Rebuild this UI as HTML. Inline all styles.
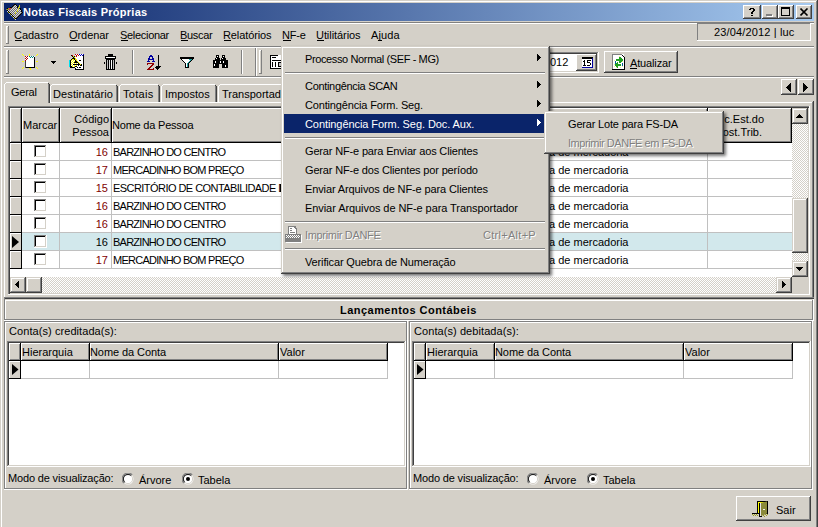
<!DOCTYPE html><html><head><meta charset="utf-8"><style>
html,body{margin:0;padding:0;width:818px;height:527px;overflow:hidden;background:#D4D0C8}
#w{position:relative;width:818px;height:527px;overflow:hidden}
#w div,#w span,#w svg{position:absolute}
#w span{font-family:"Liberation Sans",sans-serif;font-size:11px;line-height:13px;white-space:nowrap}
</style></head><body><div id="w">
<div style="left:0px;top:0px;width:818px;height:527px;background:#D4D0C8;"></div>
<div style="left:1px;top:1px;width:816px;height:1px;background:#FFFFFF;"></div>
<div style="left:1px;top:1px;width:1px;height:526px;background:#FFFFFF;"></div>
<div style="left:817px;top:0px;width:1px;height:527px;background:#404040;"></div>
<div style="left:816px;top:1px;width:1px;height:526px;background:#808080;"></div>
<div style="left:4px;top:3px;width:810px;height:18px;background:linear-gradient(to right,#0A246A,#A6CAF0);"></div>
<span style="left:23px;top:6px;color:#FFFFFF;font-weight:bold;letter-spacing:0.264px;">Notas Fiscais Próprias</span>
<div style="left:743px;top:5px;width:18px;height:14px;background:#D4D0C8;"></div>
<div style="left:743px;top:18px;width:18px;height:1px;background:#404040;"></div>
<div style="left:760px;top:5px;width:1px;height:14px;background:#404040;"></div>
<div style="left:744px;top:17px;width:16px;height:1px;background:#808080;"></div>
<div style="left:759px;top:6px;width:1px;height:12px;background:#808080;"></div>
<div style="left:743px;top:5px;width:17px;height:1px;background:#FFFFFF;"></div>
<div style="left:743px;top:5px;width:1px;height:13px;background:#FFFFFF;"></div>
<div style="left:762px;top:5px;width:16px;height:14px;background:#D4D0C8;"></div>
<div style="left:762px;top:18px;width:16px;height:1px;background:#404040;"></div>
<div style="left:777px;top:5px;width:1px;height:14px;background:#404040;"></div>
<div style="left:763px;top:17px;width:14px;height:1px;background:#808080;"></div>
<div style="left:776px;top:6px;width:1px;height:12px;background:#808080;"></div>
<div style="left:762px;top:5px;width:15px;height:1px;background:#FFFFFF;"></div>
<div style="left:762px;top:5px;width:1px;height:13px;background:#FFFFFF;"></div>
<div style="left:778px;top:5px;width:16px;height:14px;background:#D4D0C8;"></div>
<div style="left:778px;top:18px;width:16px;height:1px;background:#404040;"></div>
<div style="left:793px;top:5px;width:1px;height:14px;background:#404040;"></div>
<div style="left:779px;top:17px;width:14px;height:1px;background:#808080;"></div>
<div style="left:792px;top:6px;width:1px;height:12px;background:#808080;"></div>
<div style="left:778px;top:5px;width:15px;height:1px;background:#FFFFFF;"></div>
<div style="left:778px;top:5px;width:1px;height:13px;background:#FFFFFF;"></div>
<div style="left:796px;top:5px;width:16px;height:14px;background:#D4D0C8;"></div>
<div style="left:796px;top:18px;width:16px;height:1px;background:#404040;"></div>
<div style="left:811px;top:5px;width:1px;height:14px;background:#404040;"></div>
<div style="left:797px;top:17px;width:14px;height:1px;background:#808080;"></div>
<div style="left:810px;top:6px;width:1px;height:12px;background:#808080;"></div>
<div style="left:796px;top:5px;width:15px;height:1px;background:#FFFFFF;"></div>
<div style="left:796px;top:5px;width:1px;height:13px;background:#FFFFFF;"></div>
<svg style="left:749px;top:8px" width="6" height="8" shape-rendering="crispEdges"><g fill="#000"><rect x="1" y="0" width="1" height="1"/><rect x="2" y="0" width="1" height="1"/><rect x="3" y="0" width="1" height="1"/><rect x="4" y="0" width="1" height="1"/><rect x="0" y="1" width="1" height="1"/><rect x="1" y="1" width="1" height="1"/><rect x="4" y="1" width="1" height="1"/><rect x="5" y="1" width="1" height="1"/><rect x="4" y="2" width="1" height="1"/><rect x="5" y="2" width="1" height="1"/><rect x="3" y="3" width="1" height="1"/><rect x="4" y="3" width="1" height="1"/><rect x="2" y="4" width="1" height="1"/><rect x="3" y="4" width="1" height="1"/><rect x="2" y="5" width="1" height="1"/><rect x="3" y="5" width="1" height="1"/><rect x="2" y="7" width="1" height="1"/><rect x="3" y="7" width="1" height="1"/></g></svg>
<div style="left:767px;top:15px;width:6px;height:2px;background:#FFFFFF;"></div>
<div style="left:766px;top:14px;width:6px;height:2px;background:#808080;"></div>
<div style="left:781px;top:7px;width:7px;height:6px;border:1px solid #000;border-top-width:2px;"></div>
<svg style="position:absolute;left:800px;top:8px" width="9" height="8"><path d="M0.5 0.5L7.5 7.5M7.5 0.5L0.5 7.5" stroke="#000" stroke-width="1.6"/></svg>
<div style="left:4px;top:22px;width:810px;height:1px;background:#808080;"></div>
<div style="left:4px;top:23px;width:810px;height:1px;background:#FFFFFF;"></div>
<div style="left:6px;top:26px;width:1px;height:17px;background:#FFFFFF;"></div>
<div style="left:6px;top:26px;width:3px;height:1px;background:#FFFFFF;"></div>
<div style="left:8px;top:26px;width:1px;height:18px;background:#808080;"></div>
<div style="left:6px;top:43px;width:3px;height:1px;background:#808080;"></div>
<span style="left:14px;top:29px;color:#000;letter-spacing:-0.020px;">Cadastro</span>
<span style="left:69px;top:29px;color:#000;letter-spacing:-0.054px;">Ordenar</span>
<span style="left:120px;top:29px;color:#000;letter-spacing:-0.300px;">Selecionar</span>
<span style="left:180px;top:29px;color:#000;letter-spacing:-0.292px;">Buscar</span>
<span style="left:223px;top:29px;color:#000;letter-spacing:-0.103px;">Relatórios</span>
<span style="left:282px;top:29px;color:#000;letter-spacing:-0.184px;">NF-e</span>
<span style="left:316px;top:29px;color:#000;letter-spacing:-0.065px;">Utilitários</span>
<span style="left:371px;top:29px;color:#000;letter-spacing:0.109px;">Ajuda</span>
<div style="left:4px;top:46px;width:810px;height:1px;background:#808080;"></div>
<div style="left:4px;top:47px;width:810px;height:1px;background:#FFFFFF;"></div>
<div style="left:697px;top:23px;width:114px;height:1px;background:#808080;"></div>
<div style="left:697px;top:23px;width:1px;height:18px;background:#808080;"></div>
<div style="left:697px;top:40px;width:114px;height:1px;background:#FFFFFF;"></div>
<div style="left:810px;top:23px;width:1px;height:18px;background:#FFFFFF;"></div>
<span style="left:714px;top:26px;color:#000;letter-spacing:0.146px;">23/04/2012 | luc</span>
<div style="left:6px;top:50px;width:1px;height:23px;background:#FFFFFF;"></div>
<div style="left:6px;top:50px;width:3px;height:1px;background:#FFFFFF;"></div>
<div style="left:8px;top:50px;width:1px;height:24px;background:#808080;"></div>
<div style="left:6px;top:73px;width:3px;height:1px;background:#808080;"></div>
<div style="left:132px;top:50px;width:1px;height:24px;background:#808080;"></div>
<div style="left:133px;top:50px;width:1px;height:24px;background:#FFFFFF;"></div>
<div style="left:241px;top:50px;width:1px;height:24px;background:#808080;"></div>
<div style="left:242px;top:50px;width:1px;height:24px;background:#FFFFFF;"></div>
<div style="left:255px;top:48px;width:1px;height:28px;background:#808080;"></div>
<div style="left:256px;top:48px;width:1px;height:28px;background:#FFFFFF;"></div>
<div style="left:259px;top:50px;width:1px;height:23px;background:#FFFFFF;"></div>
<div style="left:259px;top:50px;width:3px;height:1px;background:#FFFFFF;"></div>
<div style="left:261px;top:50px;width:1px;height:24px;background:#808080;"></div>
<div style="left:259px;top:73px;width:3px;height:1px;background:#808080;"></div>
<div style="left:4px;top:76px;width:810px;height:1px;background:#808080;"></div>
<div style="left:4px;top:77px;width:810px;height:1px;background:#FFFFFF;"></div>
<div style="left:480px;top:52px;width:119px;height:21px;background:#FFFFFF;"></div>
<div style="left:480px;top:52px;width:119px;height:1px;background:#808080;"></div>
<div style="left:480px;top:52px;width:1px;height:21px;background:#808080;"></div>
<div style="left:480px;top:72px;width:119px;height:1px;background:#FFFFFF;"></div>
<div style="left:598px;top:52px;width:1px;height:21px;background:#FFFFFF;"></div>
<div style="left:481px;top:53px;width:117px;height:1px;background:#404040;"></div>
<div style="left:481px;top:53px;width:1px;height:19px;background:#404040;"></div>
<div style="left:481px;top:71px;width:117px;height:1px;background:#D4D0C8;"></div>
<div style="left:597px;top:53px;width:1px;height:19px;background:#D4D0C8;"></div>
<span style="left:550px;top:56px;color:#000;">012</span>
<div style="left:576px;top:54px;width:21px;height:17px;background:#D4D0C8;"></div>
<div style="left:576px;top:70px;width:21px;height:1px;background:#404040;"></div>
<div style="left:596px;top:54px;width:1px;height:17px;background:#404040;"></div>
<div style="left:577px;top:69px;width:19px;height:1px;background:#808080;"></div>
<div style="left:595px;top:55px;width:1px;height:15px;background:#808080;"></div>
<div style="left:576px;top:54px;width:20px;height:1px;background:#FFFFFF;"></div>
<div style="left:576px;top:54px;width:1px;height:16px;background:#FFFFFF;"></div>
<div style="left:604px;top:51px;width:74px;height:22px;background:#D4D0C8;"></div>
<div style="left:604px;top:72px;width:74px;height:1px;background:#404040;"></div>
<div style="left:677px;top:51px;width:1px;height:22px;background:#404040;"></div>
<div style="left:605px;top:71px;width:72px;height:1px;background:#808080;"></div>
<div style="left:676px;top:52px;width:1px;height:20px;background:#808080;"></div>
<div style="left:604px;top:51px;width:73px;height:1px;background:#FFFFFF;"></div>
<div style="left:604px;top:51px;width:1px;height:21px;background:#FFFFFF;"></div>
<span style="left:630px;top:57px;color:#000;letter-spacing:-0.146px;">Atualizar</span>
<div style="left:15px;top:40px;width:7px;height:1px;background:#000;"></div>
<div style="left:70px;top:40px;width:8px;height:1px;background:#000;"></div>
<div style="left:121px;top:40px;width:7px;height:1px;background:#000;"></div>
<div style="left:181px;top:40px;width:7px;height:1px;background:#000;"></div>
<div style="left:224px;top:40px;width:7px;height:1px;background:#000;"></div>
<div style="left:283px;top:40px;width:8px;height:1px;background:#000;"></div>
<div style="left:317px;top:40px;width:7px;height:1px;background:#000;"></div>
<div style="left:378px;top:40px;width:4px;height:1px;background:#000;"></div>
<div style="left:630px;top:68px;width:7px;height:1px;background:#000;"></div>
<svg style="left:5px;top:3px" width="18" height="18" shape-rendering="crispEdges"><rect x="9" y="1" width="1" height="1" fill="#000"/><rect x="10" y="1" width="1" height="1" fill="#000"/><rect x="8" y="2" width="1" height="1" fill="#000"/><rect x="9" y="2" width="1" height="1" fill="#707070"/><rect x="10" y="2" width="1" height="1" fill="#D8D8D8"/><rect x="11" y="2" width="1" height="1" fill="#000"/><rect x="14" y="2" width="1" height="1" fill="#D0D020"/><rect x="7" y="3" width="1" height="1" fill="#000"/><rect x="8" y="3" width="1" height="1" fill="#707070"/><rect x="9" y="3" width="1" height="1" fill="#D8D8D8"/><rect x="10" y="3" width="1" height="1" fill="#707070"/><rect x="11" y="3" width="1" height="1" fill="#D8D8D8"/><rect x="12" y="3" width="1" height="1" fill="#000"/><rect x="14" y="3" width="1" height="1" fill="#D0D020"/><rect x="5" y="4" width="1" height="1" fill="#000"/><rect x="6" y="4" width="1" height="1" fill="#000"/><rect x="7" y="4" width="1" height="1" fill="#707070"/><rect x="8" y="4" width="1" height="1" fill="#D8D8D8"/><rect x="9" y="4" width="1" height="1" fill="#707070"/><rect x="10" y="4" width="1" height="1" fill="#D8D8D8"/><rect x="11" y="4" width="1" height="1" fill="#707070"/><rect x="12" y="4" width="1" height="1" fill="#000"/><rect x="13" y="4" width="1" height="1" fill="#D0D020"/><rect x="14" y="4" width="1" height="1" fill="#D0D020"/><rect x="2" y="5" width="1" height="1" fill="#000"/><rect x="3" y="5" width="1" height="1" fill="#B0B000"/><rect x="4" y="5" width="1" height="1" fill="#E04040"/><rect x="5" y="5" width="1" height="1" fill="#E04040"/><rect x="6" y="5" width="1" height="1" fill="#707070"/><rect x="7" y="5" width="1" height="1" fill="#D8D8D8"/><rect x="8" y="5" width="1" height="1" fill="#707070"/><rect x="9" y="5" width="1" height="1" fill="#D8D8D8"/><rect x="10" y="5" width="1" height="1" fill="#707070"/><rect x="11" y="5" width="1" height="1" fill="#D8D8D8"/><rect x="12" y="5" width="1" height="1" fill="#707070"/><rect x="13" y="5" width="1" height="1" fill="#D0D020"/><rect x="15" y="5" width="1" height="1" fill="#000"/><rect x="1" y="6" width="1" height="1" fill="#707070"/><rect x="2" y="6" width="1" height="1" fill="#B0B000"/><rect x="3" y="6" width="1" height="1" fill="#707070"/><rect x="4" y="6" width="1" height="1" fill="#E04040"/><rect x="5" y="6" width="1" height="1" fill="#707070"/><rect x="6" y="6" width="1" height="1" fill="#D8D8D8"/><rect x="7" y="6" width="1" height="1" fill="#707070"/><rect x="8" y="6" width="1" height="1" fill="#D8D8D8"/><rect x="9" y="6" width="1" height="1" fill="#707070"/><rect x="10" y="6" width="1" height="1" fill="#D8D8D8"/><rect x="11" y="6" width="1" height="1" fill="#707070"/><rect x="12" y="6" width="1" height="1" fill="#D8D8D8"/><rect x="13" y="6" width="1" height="1" fill="#D0D020"/><rect x="14" y="6" width="1" height="1" fill="#D8D8D8"/><rect x="15" y="6" width="1" height="1" fill="#000"/><rect x="2" y="7" width="1" height="1" fill="#000"/><rect x="3" y="7" width="1" height="1" fill="#D8D8D8"/><rect x="4" y="7" width="1" height="1" fill="#707070"/><rect x="5" y="7" width="1" height="1" fill="#D8D8D8"/><rect x="6" y="7" width="1" height="1" fill="#707070"/><rect x="7" y="7" width="1" height="1" fill="#D8D8D8"/><rect x="8" y="7" width="1" height="1" fill="#707070"/><rect x="9" y="7" width="1" height="1" fill="#D8D8D8"/><rect x="10" y="7" width="1" height="1" fill="#707070"/><rect x="11" y="7" width="1" height="1" fill="#D8D8D8"/><rect x="12" y="7" width="1" height="1" fill="#D0D020"/><rect x="13" y="7" width="1" height="1" fill="#D8D8D8"/><rect x="14" y="7" width="1" height="1" fill="#707070"/><rect x="15" y="7" width="1" height="1" fill="#D8D8D8"/><rect x="16" y="7" width="1" height="1" fill="#000"/><rect x="2" y="8" width="1" height="1" fill="#D8D8D8"/><rect x="3" y="8" width="1" height="1" fill="#000"/><rect x="4" y="8" width="1" height="1" fill="#D8D8D8"/><rect x="5" y="8" width="1" height="1" fill="#707070"/><rect x="6" y="8" width="1" height="1" fill="#D8D8D8"/><rect x="7" y="8" width="1" height="1" fill="#707070"/><rect x="8" y="8" width="1" height="1" fill="#D8D8D8"/><rect x="9" y="8" width="1" height="1" fill="#707070"/><rect x="10" y="8" width="1" height="1" fill="#D8D8D8"/><rect x="11" y="8" width="1" height="1" fill="#707070"/><rect x="12" y="8" width="1" height="1" fill="#D0D020"/><rect x="13" y="8" width="1" height="1" fill="#707070"/><rect x="14" y="8" width="1" height="1" fill="#D8D8D8"/><rect x="15" y="8" width="1" height="1" fill="#707070"/><rect x="16" y="8" width="1" height="1" fill="#000"/><rect x="3" y="9" width="1" height="1" fill="#B0B000"/><rect x="4" y="9" width="1" height="1" fill="#000"/><rect x="5" y="9" width="1" height="1" fill="#D8D8D8"/><rect x="6" y="9" width="1" height="1" fill="#707070"/><rect x="7" y="9" width="1" height="1" fill="#D8D8D8"/><rect x="8" y="9" width="1" height="1" fill="#707070"/><rect x="9" y="9" width="1" height="1" fill="#D8D8D8"/><rect x="10" y="9" width="1" height="1" fill="#D0D020"/><rect x="11" y="9" width="1" height="1" fill="#D8D8D8"/><rect x="12" y="9" width="1" height="1" fill="#707070"/><rect x="13" y="9" width="1" height="1" fill="#D8D8D8"/><rect x="14" y="9" width="1" height="1" fill="#707070"/><rect x="15" y="9" width="1" height="1" fill="#D8D8D8"/><rect x="16" y="9" width="1" height="1" fill="#707070"/><rect x="17" y="9" width="1" height="1" fill="#000"/><rect x="4" y="10" width="1" height="1" fill="#D8D8D8"/><rect x="5" y="10" width="1" height="1" fill="#000"/><rect x="6" y="10" width="1" height="1" fill="#D8D8D8"/><rect x="7" y="10" width="1" height="1" fill="#707070"/><rect x="8" y="10" width="1" height="1" fill="#D8D8D8"/><rect x="9" y="10" width="1" height="1" fill="#707070"/><rect x="10" y="10" width="1" height="1" fill="#D0D020"/><rect x="11" y="10" width="1" height="1" fill="#707070"/><rect x="12" y="10" width="1" height="1" fill="#D8D8D8"/><rect x="13" y="10" width="1" height="1" fill="#707070"/><rect x="14" y="10" width="1" height="1" fill="#D8D8D8"/><rect x="15" y="10" width="1" height="1" fill="#707070"/><rect x="16" y="10" width="1" height="1" fill="#000"/><rect x="5" y="11" width="1" height="1" fill="#B0B000"/><rect x="6" y="11" width="1" height="1" fill="#000"/><rect x="7" y="11" width="1" height="1" fill="#D8D8D8"/><rect x="8" y="11" width="1" height="1" fill="#707070"/><rect x="9" y="11" width="1" height="1" fill="#D8D8D8"/><rect x="10" y="11" width="1" height="1" fill="#707070"/><rect x="11" y="11" width="1" height="1" fill="#D8D8D8"/><rect x="12" y="11" width="1" height="1" fill="#707070"/><rect x="13" y="11" width="1" height="1" fill="#D8D8D8"/><rect x="14" y="11" width="1" height="1" fill="#707070"/><rect x="15" y="11" width="1" height="1" fill="#000"/><rect x="6" y="12" width="1" height="1" fill="#D8D8D8"/><rect x="7" y="12" width="1" height="1" fill="#000"/><rect x="8" y="12" width="1" height="1" fill="#D8D8D8"/><rect x="9" y="12" width="1" height="1" fill="#707070"/><rect x="10" y="12" width="1" height="1" fill="#D8D8D8"/><rect x="11" y="12" width="1" height="1" fill="#707070"/><rect x="12" y="12" width="1" height="1" fill="#D8D8D8"/><rect x="13" y="12" width="1" height="1" fill="#707070"/><rect x="14" y="12" width="1" height="1" fill="#000"/><rect x="7" y="13" width="1" height="1" fill="#B0B000"/><rect x="8" y="13" width="1" height="1" fill="#000"/><rect x="9" y="13" width="1" height="1" fill="#D8D8D8"/><rect x="10" y="13" width="1" height="1" fill="#707070"/><rect x="11" y="13" width="1" height="1" fill="#D8D8D8"/><rect x="12" y="13" width="1" height="1" fill="#707070"/><rect x="13" y="13" width="1" height="1" fill="#000"/><rect x="8" y="14" width="1" height="1" fill="#D8D8D8"/><rect x="9" y="14" width="1" height="1" fill="#000"/><rect x="10" y="14" width="1" height="1" fill="#D8D8D8"/><rect x="11" y="14" width="1" height="1" fill="#707070"/><rect x="12" y="14" width="1" height="1" fill="#000"/><rect x="9" y="15" width="1" height="1" fill="#B0B000"/><rect x="10" y="15" width="1" height="1" fill="#000"/><rect x="11" y="15" width="1" height="1" fill="#000"/><rect x="10" y="16" width="1" height="1" fill="#D8D8D8"/></svg>
<svg style="left:20px;top:52px" width="20" height="20" shape-rendering="crispEdges">
<rect x="5" y="4" width="10" height="12" fill="#fff"/><rect x="14" y="5" width="1" height="11" fill="#000"/><rect x="5" y="15" width="10" height="1" fill="#000"/><rect x="5" y="8" width="1" height="8" fill="#404040"/>
<g fill="#B00000"><rect x="5" y="4" width="1" height="1"/><rect x="7" y="4" width="1" height="1"/><rect x="6" y="5" width="1" height="1"/><rect x="5" y="6" width="1" height="1"/><rect x="7" y="6" width="1" height="1"/><rect x="6" y="7" width="1" height="1"/><rect x="5" y="8" width="1" height="1"/></g>
<g fill="#008080"><rect x="9" y="4" width="1" height="1"/><rect x="11" y="4" width="1" height="1"/><rect x="13" y="4" width="1" height="1"/><rect x="10" y="5" width="1" height="1"/><rect x="12" y="5" width="1" height="1"/></g>
<g fill="#FFFF00"><rect x="2" y="2" width="1" height="1"/><rect x="3" y="3" width="1" height="1"/><rect x="9" y="2" width="1" height="2"/><rect x="17" y="2" width="1" height="1"/><rect x="16" y="3" width="1" height="1"/>
<rect x="2" y="9" width="2" height="1"/><rect x="16" y="9" width="2" height="1"/>
<rect x="3" y="15" width="1" height="1"/><rect x="2" y="16" width="1" height="1"/><rect x="9" y="16" width="2" height="1"/><rect x="10" y="17" width="1" height="1"/><rect x="16" y="15" width="1" height="1"/><rect x="17" y="16" width="1" height="1"/></g>
</svg>
<svg style="left:51px;top:61px" width="5" height="3" shape-rendering="crispEdges"><path d="M0 0h5v1h-1v1h-1v1h-1v-1h-1v-1h-1z" fill="#000"/></svg>
<svg style="left:66px;top:51px" width="20" height="20" shape-rendering="crispEdges"><rect x="9" y="3" width="1" height="1" fill="#C00000"/><rect x="10" y="3" width="1" height="1" fill="#FFFFFF"/><rect x="11" y="3" width="1" height="1" fill="#C00000"/><rect x="12" y="3" width="1" height="1" fill="#FFFFFF"/><rect x="13" y="3" width="1" height="1" fill="#0000C0"/><rect x="14" y="3" width="1" height="1" fill="#FFFFFF"/><rect x="15" y="3" width="1" height="1" fill="#0000C0"/><rect x="16" y="3" width="1" height="1" fill="#FFFFFF"/><rect x="17" y="3" width="1" height="1" fill="#0000C0"/><rect x="5" y="4" width="1" height="1" fill="#000"/><rect x="6" y="4" width="1" height="1" fill="#E00000"/><rect x="9" y="4" width="1" height="1" fill="#FFFFFF"/><rect x="10" y="4" width="1" height="1" fill="#C00000"/><rect x="11" y="4" width="1" height="1" fill="#FFFFFF"/><rect x="12" y="4" width="1" height="1" fill="#C00000"/><rect x="13" y="4" width="1" height="1" fill="#FFFFFF"/><rect x="14" y="4" width="1" height="1" fill="#0000C0"/><rect x="15" y="4" width="1" height="1" fill="#FFFFFF"/><rect x="16" y="4" width="1" height="1" fill="#0000C0"/><rect x="17" y="4" width="1" height="1" fill="#000"/><rect x="6" y="5" width="1" height="1" fill="#000"/><rect x="7" y="5" width="1" height="1" fill="#E8E800"/><rect x="8" y="5" width="1" height="1" fill="#000"/><rect x="10" y="5" width="1" height="1" fill="#C00000"/><rect x="11" y="5" width="1" height="1" fill="#FFFFFF"/><rect x="12" y="5" width="1" height="1" fill="#FFFFFF"/><rect x="13" y="5" width="1" height="1" fill="#FFFFFF"/><rect x="14" y="5" width="1" height="1" fill="#FFFFFF"/><rect x="15" y="5" width="1" height="1" fill="#FFFFFF"/><rect x="16" y="5" width="1" height="1" fill="#FFFFFF"/><rect x="17" y="5" width="1" height="1" fill="#000"/><rect x="7" y="6" width="1" height="1" fill="#000"/><rect x="8" y="6" width="1" height="1" fill="#E8E800"/><rect x="9" y="6" width="1" height="1" fill="#FFFFFF"/><rect x="10" y="6" width="1" height="1" fill="#FFFFFF"/><rect x="11" y="6" width="1" height="1" fill="#FFFFFF"/><rect x="12" y="6" width="1" height="1" fill="#FFFFFF"/><rect x="13" y="6" width="1" height="1" fill="#FFFFFF"/><rect x="14" y="6" width="1" height="1" fill="#FFFFFF"/><rect x="15" y="6" width="1" height="1" fill="#FFFFFF"/><rect x="16" y="6" width="1" height="1" fill="#FFFFFF"/><rect x="17" y="6" width="1" height="1" fill="#000"/><rect x="6" y="7" width="1" height="1" fill="#000"/><rect x="7" y="7" width="1" height="1" fill="#000"/><rect x="8" y="7" width="1" height="1" fill="#000"/><rect x="9" y="7" width="1" height="1" fill="#E8E800"/><rect x="10" y="7" width="1" height="1" fill="#FFFFFF"/><rect x="11" y="7" width="1" height="1" fill="#FFFFFF"/><rect x="12" y="7" width="1" height="1" fill="#FFFFFF"/><rect x="13" y="7" width="1" height="1" fill="#FFFFFF"/><rect x="14" y="7" width="1" height="1" fill="#FFFFFF"/><rect x="15" y="7" width="1" height="1" fill="#FFFFFF"/><rect x="16" y="7" width="1" height="1" fill="#FFFFFF"/><rect x="17" y="7" width="1" height="1" fill="#000"/><rect x="5" y="8" width="1" height="1" fill="#000"/><rect x="6" y="8" width="1" height="1" fill="#FFFF00"/><rect x="7" y="8" width="1" height="1" fill="#FFFF00"/><rect x="8" y="8" width="1" height="1" fill="#000"/><rect x="9" y="8" width="1" height="1" fill="#E8E800"/><rect x="10" y="8" width="1" height="1" fill="#E8E800"/><rect x="11" y="8" width="1" height="1" fill="#FFFFFF"/><rect x="12" y="8" width="1" height="1" fill="#FFFFFF"/><rect x="13" y="8" width="1" height="1" fill="#FFFFFF"/><rect x="14" y="8" width="1" height="1" fill="#FFFFFF"/><rect x="15" y="8" width="1" height="1" fill="#FFFFFF"/><rect x="16" y="8" width="1" height="1" fill="#FFFFFF"/><rect x="17" y="8" width="1" height="1" fill="#000"/><rect x="3" y="9" width="1" height="1" fill="#00E0F0"/><rect x="4" y="9" width="1" height="1" fill="#000"/><rect x="5" y="9" width="1" height="1" fill="#FFFF00"/><rect x="6" y="9" width="1" height="1" fill="#FFFFFF"/><rect x="7" y="9" width="1" height="1" fill="#FFFF00"/><rect x="8" y="9" width="1" height="1" fill="#FFFFFF"/><rect x="9" y="9" width="1" height="1" fill="#000"/><rect x="10" y="9" width="1" height="1" fill="#E8E800"/><rect x="11" y="9" width="1" height="1" fill="#FFFFFF"/><rect x="12" y="9" width="1" height="1" fill="#FFFFFF"/><rect x="13" y="9" width="1" height="1" fill="#000"/><rect x="14" y="9" width="1" height="1" fill="#000"/><rect x="15" y="9" width="1" height="1" fill="#FFFFFF"/><rect x="16" y="9" width="1" height="1" fill="#FFFFFF"/><rect x="17" y="9" width="1" height="1" fill="#000"/><rect x="3" y="10" width="1" height="1" fill="#00E0F0"/><rect x="4" y="10" width="1" height="1" fill="#000"/><rect x="5" y="10" width="1" height="1" fill="#FFFFFF"/><rect x="6" y="10" width="1" height="1" fill="#FFFF00"/><rect x="7" y="10" width="1" height="1" fill="#FFFFFF"/><rect x="8" y="10" width="1" height="1" fill="#FFFF00"/><rect x="9" y="10" width="1" height="1" fill="#000"/><rect x="10" y="10" width="1" height="1" fill="#000"/><rect x="11" y="10" width="1" height="1" fill="#E8E800"/><rect x="12" y="10" width="1" height="1" fill="#FFFFFF"/><rect x="13" y="10" width="1" height="1" fill="#FFFFFF"/><rect x="14" y="10" width="1" height="1" fill="#FFFFFF"/><rect x="15" y="10" width="1" height="1" fill="#FFFFFF"/><rect x="16" y="10" width="1" height="1" fill="#FFFFFF"/><rect x="17" y="10" width="1" height="1" fill="#000"/><rect x="3" y="11" width="1" height="1" fill="#00E0F0"/><rect x="4" y="11" width="1" height="1" fill="#000"/><rect x="5" y="11" width="1" height="1" fill="#FFFF00"/><rect x="6" y="11" width="1" height="1" fill="#FFFFFF"/><rect x="7" y="11" width="1" height="1" fill="#FFFF00"/><rect x="8" y="11" width="1" height="1" fill="#000"/><rect x="9" y="11" width="1" height="1" fill="#000"/><rect x="10" y="11" width="1" height="1" fill="#000"/><rect x="11" y="11" width="1" height="1" fill="#000"/><rect x="12" y="11" width="1" height="1" fill="#E8E800"/><rect x="13" y="11" width="1" height="1" fill="#FFFFFF"/><rect x="14" y="11" width="1" height="1" fill="#FFFFFF"/><rect x="15" y="11" width="1" height="1" fill="#FFFFFF"/><rect x="16" y="11" width="1" height="1" fill="#FFFFFF"/><rect x="17" y="11" width="1" height="1" fill="#000"/><rect x="3" y="12" width="1" height="1" fill="#00E0F0"/><rect x="4" y="12" width="1" height="1" fill="#000"/><rect x="5" y="12" width="1" height="1" fill="#FFFFFF"/><rect x="6" y="12" width="1" height="1" fill="#FFFF00"/><rect x="7" y="12" width="1" height="1" fill="#FFFFFF"/><rect x="8" y="12" width="1" height="1" fill="#FFFF00"/><rect x="9" y="12" width="1" height="1" fill="#FFFFFF"/><rect x="10" y="12" width="1" height="1" fill="#FFFF00"/><rect x="11" y="12" width="1" height="1" fill="#FFFFFF"/><rect x="12" y="12" width="1" height="1" fill="#000"/><rect x="13" y="12" width="1" height="1" fill="#E8E800"/><rect x="14" y="12" width="1" height="1" fill="#FFFFFF"/><rect x="15" y="12" width="1" height="1" fill="#FFFFFF"/><rect x="16" y="12" width="1" height="1" fill="#FFFFFF"/><rect x="17" y="12" width="1" height="1" fill="#000"/><rect x="3" y="13" width="1" height="1" fill="#00E0F0"/><rect x="4" y="13" width="1" height="1" fill="#000"/><rect x="5" y="13" width="1" height="1" fill="#FFFF00"/><rect x="6" y="13" width="1" height="1" fill="#FFFFFF"/><rect x="7" y="13" width="1" height="1" fill="#000"/><rect x="8" y="13" width="1" height="1" fill="#000"/><rect x="9" y="13" width="1" height="1" fill="#000"/><rect x="10" y="13" width="1" height="1" fill="#000"/><rect x="11" y="13" width="1" height="1" fill="#000"/><rect x="12" y="13" width="1" height="1" fill="#000"/><rect x="13" y="13" width="1" height="1" fill="#000"/><rect x="14" y="13" width="1" height="1" fill="#E8E800"/><rect x="15" y="13" width="1" height="1" fill="#000"/><rect x="16" y="13" width="1" height="1" fill="#FFFFFF"/><rect x="17" y="13" width="1" height="1" fill="#000"/><rect x="3" y="14" width="1" height="1" fill="#00E0F0"/><rect x="4" y="14" width="1" height="1" fill="#000"/><rect x="5" y="14" width="1" height="1" fill="#FFFFFF"/><rect x="6" y="14" width="1" height="1" fill="#FFFF00"/><rect x="7" y="14" width="1" height="1" fill="#FFFFFF"/><rect x="8" y="14" width="1" height="1" fill="#FFFF00"/><rect x="9" y="14" width="1" height="1" fill="#FFFFFF"/><rect x="10" y="14" width="1" height="1" fill="#FFFF00"/><rect x="11" y="14" width="1" height="1" fill="#FFFFFF"/><rect x="12" y="14" width="1" height="1" fill="#000"/><rect x="13" y="14" width="1" height="1" fill="#FFFFFF"/><rect x="14" y="14" width="1" height="1" fill="#000"/><rect x="15" y="14" width="1" height="1" fill="#000"/><rect x="16" y="14" width="1" height="1" fill="#FFFFFF"/><rect x="17" y="14" width="1" height="1" fill="#000"/><rect x="3" y="15" width="1" height="1" fill="#00E0F0"/><rect x="4" y="15" width="1" height="1" fill="#000"/><rect x="5" y="15" width="1" height="1" fill="#000"/><rect x="6" y="15" width="1" height="1" fill="#FFFF00"/><rect x="7" y="15" width="1" height="1" fill="#FFFFFF"/><rect x="8" y="15" width="1" height="1" fill="#FFFF00"/><rect x="9" y="15" width="1" height="1" fill="#000"/><rect x="10" y="15" width="1" height="1" fill="#000"/><rect x="11" y="15" width="1" height="1" fill="#FFFFFF"/><rect x="12" y="15" width="1" height="1" fill="#FFFFFF"/><rect x="13" y="15" width="1" height="1" fill="#FFFFFF"/><rect x="14" y="15" width="1" height="1" fill="#FFFFFF"/><rect x="15" y="15" width="1" height="1" fill="#FFFFFF"/><rect x="16" y="15" width="1" height="1" fill="#FFFFFF"/><rect x="17" y="15" width="1" height="1" fill="#000"/><rect x="4" y="16" width="1" height="1" fill="#000"/><rect x="5" y="16" width="1" height="1" fill="#000"/><rect x="6" y="16" width="1" height="1" fill="#000"/><rect x="7" y="16" width="1" height="1" fill="#000"/><rect x="8" y="16" width="1" height="1" fill="#000"/><rect x="9" y="16" width="1" height="1" fill="#FFFFFF"/><rect x="10" y="16" width="1" height="1" fill="#FFFFFF"/><rect x="11" y="16" width="1" height="1" fill="#000"/><rect x="12" y="16" width="1" height="1" fill="#FFFFFF"/><rect x="13" y="16" width="1" height="1" fill="#000"/><rect x="14" y="16" width="1" height="1" fill="#000"/><rect x="15" y="16" width="1" height="1" fill="#FFFFFF"/><rect x="16" y="16" width="1" height="1" fill="#FFFFFF"/><rect x="17" y="16" width="1" height="1" fill="#000"/><rect x="9" y="17" width="1" height="1" fill="#000"/><rect x="10" y="17" width="1" height="1" fill="#FFFFFF"/><rect x="11" y="17" width="1" height="1" fill="#FFFFFF"/><rect x="12" y="17" width="1" height="1" fill="#FFFFFF"/><rect x="13" y="17" width="1" height="1" fill="#FFFFFF"/><rect x="14" y="17" width="1" height="1" fill="#FFFFFF"/><rect x="15" y="17" width="1" height="1" fill="#FFFFFF"/><rect x="16" y="17" width="1" height="1" fill="#FFFFFF"/><rect x="17" y="17" width="1" height="1" fill="#000"/><rect x="9" y="18" width="1" height="1" fill="#000"/><rect x="10" y="18" width="1" height="1" fill="#000"/><rect x="11" y="18" width="1" height="1" fill="#000"/><rect x="12" y="18" width="1" height="1" fill="#000"/><rect x="13" y="18" width="1" height="1" fill="#000"/><rect x="14" y="18" width="1" height="1" fill="#000"/><rect x="15" y="18" width="1" height="1" fill="#000"/><rect x="16" y="18" width="1" height="1" fill="#000"/><rect x="17" y="18" width="1" height="1" fill="#000"/></svg>
<svg style="left:103px;top:53px" width="16" height="18" shape-rendering="crispEdges">
<rect x="5" y="1" width="5" height="2" fill="#000"/><rect x="2" y="3" width="11" height="3" fill="#000"/><rect x="3" y="4" width="9" height="1" fill="#fff"/>
<rect x="3" y="6" width="9" height="11" fill="#000"/><rect x="4" y="7" width="1" height="9" fill="#C0C0C0"/><rect x="6" y="7" width="1" height="9" fill="#E0E0E0"/><rect x="8" y="7" width="1" height="9" fill="#fff"/><rect x="10" y="7" width="1" height="9" fill="#C0C0C0"/>
<rect x="1" y="9" width="1" height="2" fill="#000"/><rect x="13" y="9" width="1" height="2" fill="#000"/>
</svg>
<svg style="left:147px;top:54px" width="16" height="18" shape-rendering="crispEdges"><rect x="3" y="1" width="1" height="1" fill="#0000A0"/><rect x="4" y="1" width="1" height="1" fill="#0000A0"/><rect x="2" y="2" width="1" height="1" fill="#0000A0"/><rect x="3" y="2" width="1" height="1" fill="#0000A0"/><rect x="4" y="2" width="1" height="1" fill="#0000A0"/><rect x="5" y="2" width="1" height="1" fill="#0000A0"/><rect x="2" y="3" width="1" height="1" fill="#0000A0"/><rect x="5" y="3" width="1" height="1" fill="#0000A0"/><rect x="1" y="4" width="1" height="1" fill="#0000A0"/><rect x="2" y="4" width="1" height="1" fill="#0000A0"/><rect x="5" y="4" width="1" height="1" fill="#0000A0"/><rect x="6" y="4" width="1" height="1" fill="#0000A0"/><rect x="1" y="5" width="1" height="1" fill="#0000A0"/><rect x="2" y="5" width="1" height="1" fill="#0000A0"/><rect x="3" y="5" width="1" height="1" fill="#0000A0"/><rect x="4" y="5" width="1" height="1" fill="#0000A0"/><rect x="5" y="5" width="1" height="1" fill="#0000A0"/><rect x="6" y="5" width="1" height="1" fill="#0000A0"/><rect x="1" y="6" width="1" height="1" fill="#0000A0"/><rect x="6" y="6" width="1" height="1" fill="#0000A0"/><rect x="0" y="7" width="1" height="1" fill="#0000A0"/><rect x="1" y="7" width="1" height="1" fill="#0000A0"/><rect x="2" y="7" width="1" height="1" fill="#0000A0"/><rect x="5" y="7" width="1" height="1" fill="#0000A0"/><rect x="6" y="7" width="1" height="1" fill="#0000A0"/><rect x="7" y="7" width="1" height="1" fill="#0000A0"/><rect x="0" y="9" width="1" height="1" fill="#900000"/><rect x="1" y="9" width="1" height="1" fill="#900000"/><rect x="2" y="9" width="1" height="1" fill="#900000"/><rect x="3" y="9" width="1" height="1" fill="#900000"/><rect x="4" y="9" width="1" height="1" fill="#900000"/><rect x="5" y="9" width="1" height="1" fill="#900000"/><rect x="6" y="9" width="1" height="1" fill="#900000"/><rect x="0" y="10" width="1" height="1" fill="#900000"/><rect x="5" y="10" width="1" height="1" fill="#900000"/><rect x="6" y="10" width="1" height="1" fill="#900000"/><rect x="4" y="11" width="1" height="1" fill="#900000"/><rect x="5" y="11" width="1" height="1" fill="#900000"/><rect x="3" y="12" width="1" height="1" fill="#900000"/><rect x="4" y="12" width="1" height="1" fill="#900000"/><rect x="2" y="13" width="1" height="1" fill="#900000"/><rect x="3" y="13" width="1" height="1" fill="#900000"/><rect x="1" y="14" width="1" height="1" fill="#900000"/><rect x="2" y="14" width="1" height="1" fill="#900000"/><rect x="6" y="14" width="1" height="1" fill="#900000"/><rect x="0" y="15" width="1" height="1" fill="#900000"/><rect x="1" y="15" width="1" height="1" fill="#900000"/><rect x="2" y="15" width="1" height="1" fill="#900000"/><rect x="3" y="15" width="1" height="1" fill="#900000"/><rect x="4" y="15" width="1" height="1" fill="#900000"/><rect x="5" y="15" width="1" height="1" fill="#900000"/><rect x="6" y="15" width="1" height="1" fill="#900000"/>
<rect x="11" y="1" width="1" height="14" fill="#000"/><path d="M9 12h5v1h-1v1h-1v1h-1v1h-1v-1h-1v-1h-1z" fill="#000"/>
</svg>
<svg style="left:180px;top:57px" width="14" height="11" shape-rendering="crispEdges">
<path d="M0 0h14v2h-1v1h-1v1h-1v1h-1v1h-1v5h-4v-5h-1v-1h-1v-1h-1v-1h-1v-1h-1z" fill="#000"/>
<path d="M2 2h10v1h-1v1h-1v1h-1v1h-1v4h-2v-4h-1v-1h-1v-1h-1v-1h-1z" fill="#fff"/>
<path d="M8 2h4v1h-1v1h-1v1h-1v1h-1v4h-1v-4h1v-1h1v-1h1v-1h-1z" fill="#20A0A0"/>
</svg>
<svg style="left:213px;top:55px" width="15" height="13" shape-rendering="crispEdges">
<g fill="#000"><rect x="3" y="0" width="3" height="3"/><rect x="9" y="0" width="3" height="3"/><rect x="2" y="3" width="5" height="3"/><rect x="8" y="3" width="5" height="3"/>
<rect x="0" y="5" width="6" height="8"/><rect x="9" y="5" width="6" height="8"/><rect x="6" y="5" width="3" height="4"/></g>
<g fill="#fff"><rect x="4" y="1" width="1" height="1"/><rect x="10" y="1" width="1" height="1"/><rect x="3" y="3" width="1" height="1"/><rect x="9" y="3" width="1" height="1"/>
<rect x="2" y="6" width="1" height="2"/><rect x="10" y="6" width="1" height="2"/><rect x="7" y="6" width="1" height="2"/><rect x="1" y="9" width="1" height="2"/><rect x="12" y="10" width="1" height="2"/></g>
</svg>
<svg style="left:269px;top:54px" width="12" height="16" shape-rendering="crispEdges">
<rect x="1" y="1" width="11" height="14" fill="#fff"/><rect x="1" y="1" width="1" height="14" fill="#000"/><rect x="1" y="1" width="8" height="1" fill="#000"/><rect x="1" y="14" width="11" height="1" fill="#000"/>
<rect x="3" y="3" width="4" height="1" fill="#000"/><rect x="3" y="6" width="9" height="1" fill="#000"/><rect x="3" y="8" width="1" height="5" fill="#000"/><rect x="6" y="8" width="1" height="5" fill="#000"/><rect x="9" y="8" width="3" height="5" fill="#000"/><rect x="10" y="9" width="2" height="3" fill="#C0C0C0"/>
</svg>
<svg style="left:581px;top:56px" width="13" height="13" shape-rendering="crispEdges">
<rect x="1" y="1" width="11" height="11" fill="#fff"/><rect x="1" y="1" width="11" height="2" fill="#000"/>
<rect x="11" y="2" width="1" height="10" fill="#0000A0"/><rect x="1" y="11" width="11" height="1" fill="#0000A0"/>
<rect x="3" y="4" width="1" height="6" fill="#000"/><rect x="2" y="5" width="1" height="1" fill="#000"/><rect x="2" y="9" width="3" height="1" fill="#000"/>
<rect x="6" y="4" width="4" height="1" fill="#000"/><rect x="6" y="5" width="1" height="2" fill="#000"/><rect x="6" y="6" width="3" height="1" fill="#000"/><rect x="9" y="7" width="1" height="2" fill="#000"/><rect x="6" y="9" width="3" height="1" fill="#000"/>
</svg>
<svg style="left:611px;top:53px" width="15" height="18" shape-rendering="crispEdges">
<rect x="1" y="1" width="12" height="16" fill="#fff"/><rect x="1" y="1" width="1" height="16" fill="#808080"/><rect x="1" y="1" width="10" height="1" fill="#808080"/>
<rect x="13" y="4" width="1" height="13" fill="#000"/><rect x="1" y="16" width="13" height="1" fill="#000"/><rect x="11" y="2" width="1" height="1" fill="#000"/><rect x="12" y="3" width="1" height="1" fill="#000"/><rect x="11" y="3" width="1" height="1" fill="#fff"/>
<g fill="#F0F0A0"><rect x="3" y="7" width="1" height="1"/><rect x="3" y="13" width="1" height="1"/><rect x="5" y="14" width="1" height="1"/><rect x="9" y="14" width="1" height="1"/><rect x="11" y="13" width="1" height="1"/><rect x="8" y="3" width="1" height="1"/><rect x="11" y="8" width="1" height="1"/><rect x="3" y="11" width="1" height="1"/></g>
<path d="M5 6h3v-2h1l3 3l-3 3h-1v-2h-3z" fill="#20A020"/>
<path d="M10 11h-3v-2h-1l-3 3l3 3h1v-2h3z" fill="#20A020"/>
<rect x="4" y="8" width="1" height="3" fill="#006090"/><rect x="11" y="10" width="1" height="3" fill="#006090"/>
</svg>
<div style="left:4px;top:102px;width:1px;height:195px;background:#FFFFFF;"></div>
<div style="left:49px;top:102px;width:764px;height:1px;background:#FFFFFF;"></div>
<div style="left:812px;top:102px;width:1px;height:196px;background:#808080;"></div>
<div style="left:813px;top:101px;width:1px;height:198px;background:#404040;"></div>
<div style="left:4px;top:297px;width:810px;height:1px;background:#808080;"></div>
<div style="left:4px;top:298px;width:810px;height:1px;background:#404040;"></div>
<div style="left:52px;top:84px;width:64px;height:1px;background:#FFFFFF;"></div>
<div style="left:50px;top:86px;width:1px;height:17px;background:#FFFFFF;"></div>
<div style="left:51px;top:85px;width:1px;height:1px;background:#FFFFFF;"></div>
<div style="left:116px;top:85px;width:1px;height:17px;background:#808080;"></div>
<div style="left:117px;top:86px;width:1px;height:16px;background:#404040;"></div>
<div style="left:116px;top:85px;width:1px;height:1px;background:#404040;"></div>
<div style="left:121px;top:84px;width:37px;height:1px;background:#FFFFFF;"></div>
<div style="left:119px;top:86px;width:1px;height:17px;background:#FFFFFF;"></div>
<div style="left:120px;top:85px;width:1px;height:1px;background:#FFFFFF;"></div>
<div style="left:158px;top:85px;width:1px;height:17px;background:#808080;"></div>
<div style="left:159px;top:86px;width:1px;height:16px;background:#404040;"></div>
<div style="left:158px;top:85px;width:1px;height:1px;background:#404040;"></div>
<div style="left:163px;top:84px;width:52px;height:1px;background:#FFFFFF;"></div>
<div style="left:161px;top:86px;width:1px;height:17px;background:#FFFFFF;"></div>
<div style="left:162px;top:85px;width:1px;height:1px;background:#FFFFFF;"></div>
<div style="left:215px;top:85px;width:1px;height:17px;background:#808080;"></div>
<div style="left:216px;top:86px;width:1px;height:16px;background:#404040;"></div>
<div style="left:215px;top:85px;width:1px;height:1px;background:#404040;"></div>
<div style="left:220px;top:84px;width:69px;height:1px;background:#FFFFFF;"></div>
<div style="left:218px;top:86px;width:1px;height:17px;background:#FFFFFF;"></div>
<div style="left:219px;top:85px;width:1px;height:1px;background:#FFFFFF;"></div>
<div style="left:289px;top:85px;width:1px;height:17px;background:#808080;"></div>
<div style="left:290px;top:86px;width:1px;height:16px;background:#404040;"></div>
<div style="left:289px;top:85px;width:1px;height:1px;background:#404040;"></div>
<div style="left:5px;top:83px;width:44px;height:20px;background:#D4D0C8;"></div>
<div style="left:6px;top:82px;width:42px;height:1px;background:#FFFFFF;"></div>
<div style="left:4px;top:84px;width:1px;height:19px;background:#FFFFFF;"></div>
<div style="left:5px;top:83px;width:1px;height:1px;background:#FFFFFF;"></div>
<div style="left:48px;top:83px;width:1px;height:20px;background:#808080;"></div>
<div style="left:49px;top:84px;width:1px;height:19px;background:#404040;"></div>
<div style="left:48px;top:83px;width:1px;height:1px;background:#404040;"></div>
<span style="left:11px;top:86px;color:#000;letter-spacing:-0.261px;">Geral</span>
<span style="left:53px;top:88px;color:#000;letter-spacing:0.107px;">Destinatário</span>
<span style="left:123px;top:88px;color:#000;letter-spacing:0.292px;">Totais</span>
<span style="left:165px;top:88px;color:#000;">Impostos</span>
<span style="left:222px;top:88px;color:#000;">Transportadora</span>
<div style="left:781px;top:79px;width:16px;height:16px;background:#D4D0C8;"></div>
<div style="left:781px;top:94px;width:16px;height:1px;background:#404040;"></div>
<div style="left:796px;top:79px;width:1px;height:16px;background:#404040;"></div>
<div style="left:782px;top:93px;width:14px;height:1px;background:#808080;"></div>
<div style="left:795px;top:80px;width:1px;height:14px;background:#808080;"></div>
<div style="left:781px;top:79px;width:15px;height:1px;background:#FFFFFF;"></div>
<div style="left:781px;top:79px;width:1px;height:15px;background:#FFFFFF;"></div>
<div style="left:798px;top:79px;width:16px;height:16px;background:#D4D0C8;"></div>
<div style="left:798px;top:94px;width:16px;height:1px;background:#404040;"></div>
<div style="left:813px;top:79px;width:1px;height:16px;background:#404040;"></div>
<div style="left:799px;top:93px;width:14px;height:1px;background:#808080;"></div>
<div style="left:812px;top:80px;width:1px;height:14px;background:#808080;"></div>
<div style="left:798px;top:79px;width:15px;height:1px;background:#FFFFFF;"></div>
<div style="left:798px;top:79px;width:1px;height:15px;background:#FFFFFF;"></div>
<svg style="left:786px;top:83px" width="5" height="9" shape-rendering="crispEdges"><g fill="#000"><rect x="4" y="0" width="1" height="1"/><rect x="3" y="1" width="2" height="1"/><rect x="2" y="2" width="3" height="1"/><rect x="1" y="3" width="4" height="1"/><rect x="0" y="4" width="5" height="1"/><rect x="1" y="5" width="4" height="1"/><rect x="2" y="6" width="3" height="1"/><rect x="3" y="7" width="2" height="1"/><rect x="4" y="8" width="1" height="1"/></g></svg>
<svg style="left:803px;top:83px" width="5" height="9" shape-rendering="crispEdges"><g fill="#000"><rect x="0" y="0" width="1" height="1"/><rect x="0" y="1" width="2" height="1"/><rect x="0" y="2" width="3" height="1"/><rect x="0" y="3" width="4" height="1"/><rect x="0" y="4" width="5" height="1"/><rect x="0" y="5" width="4" height="1"/><rect x="0" y="6" width="3" height="1"/><rect x="0" y="7" width="2" height="1"/><rect x="0" y="8" width="1" height="1"/></g></svg>
<div style="left:8px;top:106px;width:802px;height:1px;background:#808080;"></div>
<div style="left:8px;top:106px;width:1px;height:189px;background:#808080;"></div>
<div style="left:9px;top:107px;width:800px;height:1px;background:#404040;"></div>
<div style="left:9px;top:107px;width:1px;height:187px;background:#404040;"></div>
<div style="left:8px;top:294px;width:802px;height:1px;background:#FFFFFF;"></div>
<div style="left:809px;top:106px;width:1px;height:189px;background:#FFFFFF;"></div>
<div style="left:10px;top:108px;width:782px;height:169px;background:#FFFFFF;"></div>
<div style="left:10px;top:108px;width:12px;height:35px;background:#D4D0C8;"></div>
<div style="left:10px;top:108px;width:12px;height:1px;background:#FFFFFF;"></div>
<div style="left:10px;top:108px;width:1px;height:35px;background:#FFFFFF;"></div>
<div style="left:21px;top:108px;width:1px;height:35px;background:#000;"></div>
<div style="left:10px;top:142px;width:12px;height:1px;background:#000;"></div>
<div style="left:20px;top:109px;width:1px;height:33px;background:#808080;"></div>
<div style="left:11px;top:141px;width:10px;height:1px;background:#808080;"></div>
<div style="left:22px;top:108px;width:38px;height:35px;background:#D4D0C8;"></div>
<div style="left:22px;top:108px;width:38px;height:1px;background:#FFFFFF;"></div>
<div style="left:22px;top:108px;width:1px;height:35px;background:#FFFFFF;"></div>
<div style="left:59px;top:108px;width:1px;height:35px;background:#000;"></div>
<div style="left:22px;top:142px;width:38px;height:1px;background:#000;"></div>
<div style="left:58px;top:109px;width:1px;height:33px;background:#808080;"></div>
<div style="left:23px;top:141px;width:36px;height:1px;background:#808080;"></div>
<div style="left:60px;top:108px;width:52px;height:35px;background:#D4D0C8;"></div>
<div style="left:60px;top:108px;width:52px;height:1px;background:#FFFFFF;"></div>
<div style="left:60px;top:108px;width:1px;height:35px;background:#FFFFFF;"></div>
<div style="left:111px;top:108px;width:1px;height:35px;background:#000;"></div>
<div style="left:60px;top:142px;width:52px;height:1px;background:#000;"></div>
<div style="left:110px;top:109px;width:1px;height:33px;background:#808080;"></div>
<div style="left:61px;top:141px;width:50px;height:1px;background:#808080;"></div>
<div style="left:112px;top:108px;width:596px;height:35px;background:#D4D0C8;"></div>
<div style="left:112px;top:108px;width:596px;height:1px;background:#FFFFFF;"></div>
<div style="left:112px;top:108px;width:1px;height:35px;background:#FFFFFF;"></div>
<div style="left:707px;top:108px;width:1px;height:35px;background:#000;"></div>
<div style="left:112px;top:142px;width:596px;height:1px;background:#000;"></div>
<div style="left:706px;top:109px;width:1px;height:33px;background:#808080;"></div>
<div style="left:113px;top:141px;width:594px;height:1px;background:#808080;"></div>
<div style="left:708px;top:108px;width:84px;height:35px;background:#D4D0C8;"></div>
<div style="left:708px;top:108px;width:84px;height:1px;background:#FFFFFF;"></div>
<div style="left:708px;top:108px;width:1px;height:35px;background:#FFFFFF;"></div>
<div style="left:791px;top:108px;width:1px;height:35px;background:#000;"></div>
<div style="left:708px;top:142px;width:84px;height:1px;background:#000;"></div>
<div style="left:790px;top:109px;width:1px;height:33px;background:#808080;"></div>
<div style="left:709px;top:141px;width:82px;height:1px;background:#808080;"></div>
<span style="left:23px;top:119px;color:#000;">Marcar</span>
<span style="left:60px;top:113px;width:49px;text-align:right;">Código<br>Pessoa</span>
<span style="left:112px;top:119px;color:#000;letter-spacing:-0.210px;">Nome da Pessoa</span>
<div style="left:708px;top:109px;width:82px;height:32px;overflow:hidden"><span style="left:-60px;top:4px;width:116px;text-align:right">Perc.Est.do</span><span style="left:-60px;top:17px;width:114px;text-align:right">Cost.Trib.</span></div>
<div style="left:22px;top:160px;width:770px;height:1px;background:#C0C0C0;"></div>
<div style="left:59px;top:143px;width:1px;height:18px;background:#C0C0C0;"></div>
<div style="left:111px;top:143px;width:1px;height:18px;background:#C0C0C0;"></div>
<div style="left:707px;top:143px;width:1px;height:18px;background:#C0C0C0;"></div>
<div style="left:10px;top:143px;width:12px;height:18px;background:#D4D0C8;"></div>
<div style="left:10px;top:143px;width:11px;height:1px;background:#FFFFFF;"></div>
<div style="left:10px;top:143px;width:1px;height:17px;background:#FFFFFF;"></div>
<div style="left:21px;top:143px;width:1px;height:18px;background:#000;"></div>
<div style="left:10px;top:160px;width:12px;height:1px;background:#000;"></div>
<div style="left:34px;top:145px;width:13px;height:13px;background:#FFFFFF;"></div>
<div style="left:34px;top:145px;width:12px;height:1px;background:#808080;"></div>
<div style="left:34px;top:145px;width:1px;height:12px;background:#808080;"></div>
<div style="left:35px;top:146px;width:10px;height:1px;background:#000;"></div>
<div style="left:35px;top:146px;width:1px;height:10px;background:#000;"></div>
<div style="left:35px;top:156px;width:11px;height:1px;background:#D4D0C8;"></div>
<div style="left:45px;top:146px;width:1px;height:11px;background:#D4D0C8;"></div>
<span style="left:60px;top:146px;width:48px;text-align:right;color:#800000">16</span>
<div style="left:112px;top:143px;width:595px;height:17px;overflow:hidden"><span style="position:absolute;left:1px;top:3px;letter-spacing:-0.75px">BARZINHO DO CENTRO</span></div>
<span style="left:549px;top:146px;">a de mercadoria</span>
<div style="left:22px;top:178px;width:770px;height:1px;background:#C0C0C0;"></div>
<div style="left:59px;top:161px;width:1px;height:18px;background:#C0C0C0;"></div>
<div style="left:111px;top:161px;width:1px;height:18px;background:#C0C0C0;"></div>
<div style="left:707px;top:161px;width:1px;height:18px;background:#C0C0C0;"></div>
<div style="left:10px;top:161px;width:12px;height:18px;background:#D4D0C8;"></div>
<div style="left:10px;top:161px;width:11px;height:1px;background:#FFFFFF;"></div>
<div style="left:10px;top:161px;width:1px;height:17px;background:#FFFFFF;"></div>
<div style="left:21px;top:161px;width:1px;height:18px;background:#000;"></div>
<div style="left:10px;top:178px;width:12px;height:1px;background:#000;"></div>
<div style="left:34px;top:163px;width:13px;height:13px;background:#FFFFFF;"></div>
<div style="left:34px;top:163px;width:12px;height:1px;background:#808080;"></div>
<div style="left:34px;top:163px;width:1px;height:12px;background:#808080;"></div>
<div style="left:35px;top:164px;width:10px;height:1px;background:#000;"></div>
<div style="left:35px;top:164px;width:1px;height:10px;background:#000;"></div>
<div style="left:35px;top:174px;width:11px;height:1px;background:#D4D0C8;"></div>
<div style="left:45px;top:164px;width:1px;height:11px;background:#D4D0C8;"></div>
<span style="left:60px;top:164px;width:48px;text-align:right;color:#800000">17</span>
<div style="left:112px;top:161px;width:595px;height:17px;overflow:hidden"><span style="position:absolute;left:1px;top:3px;letter-spacing:-0.75px">MERCADINHO BOM PREÇO</span></div>
<span style="left:549px;top:164px;">a de mercadoria</span>
<div style="left:22px;top:196px;width:770px;height:1px;background:#C0C0C0;"></div>
<div style="left:59px;top:179px;width:1px;height:18px;background:#C0C0C0;"></div>
<div style="left:111px;top:179px;width:1px;height:18px;background:#C0C0C0;"></div>
<div style="left:707px;top:179px;width:1px;height:18px;background:#C0C0C0;"></div>
<div style="left:10px;top:179px;width:12px;height:18px;background:#D4D0C8;"></div>
<div style="left:10px;top:179px;width:11px;height:1px;background:#FFFFFF;"></div>
<div style="left:10px;top:179px;width:1px;height:17px;background:#FFFFFF;"></div>
<div style="left:21px;top:179px;width:1px;height:18px;background:#000;"></div>
<div style="left:10px;top:196px;width:12px;height:1px;background:#000;"></div>
<div style="left:34px;top:181px;width:13px;height:13px;background:#FFFFFF;"></div>
<div style="left:34px;top:181px;width:12px;height:1px;background:#808080;"></div>
<div style="left:34px;top:181px;width:1px;height:12px;background:#808080;"></div>
<div style="left:35px;top:182px;width:10px;height:1px;background:#000;"></div>
<div style="left:35px;top:182px;width:1px;height:10px;background:#000;"></div>
<div style="left:35px;top:192px;width:11px;height:1px;background:#D4D0C8;"></div>
<div style="left:45px;top:182px;width:1px;height:11px;background:#D4D0C8;"></div>
<span style="left:60px;top:182px;width:48px;text-align:right;color:#800000">15</span>
<div style="left:112px;top:179px;width:595px;height:17px;overflow:hidden"><span style="position:absolute;left:1px;top:3px;letter-spacing:-0.55px">ESCRITÓRIO DE CONTABILIDADE DO CENTRO</span></div>
<span style="left:549px;top:182px;">a de mercadoria</span>
<div style="left:22px;top:214px;width:770px;height:1px;background:#C0C0C0;"></div>
<div style="left:59px;top:197px;width:1px;height:18px;background:#C0C0C0;"></div>
<div style="left:111px;top:197px;width:1px;height:18px;background:#C0C0C0;"></div>
<div style="left:707px;top:197px;width:1px;height:18px;background:#C0C0C0;"></div>
<div style="left:10px;top:197px;width:12px;height:18px;background:#D4D0C8;"></div>
<div style="left:10px;top:197px;width:11px;height:1px;background:#FFFFFF;"></div>
<div style="left:10px;top:197px;width:1px;height:17px;background:#FFFFFF;"></div>
<div style="left:21px;top:197px;width:1px;height:18px;background:#000;"></div>
<div style="left:10px;top:214px;width:12px;height:1px;background:#000;"></div>
<div style="left:34px;top:199px;width:13px;height:13px;background:#FFFFFF;"></div>
<div style="left:34px;top:199px;width:12px;height:1px;background:#808080;"></div>
<div style="left:34px;top:199px;width:1px;height:12px;background:#808080;"></div>
<div style="left:35px;top:200px;width:10px;height:1px;background:#000;"></div>
<div style="left:35px;top:200px;width:1px;height:10px;background:#000;"></div>
<div style="left:35px;top:210px;width:11px;height:1px;background:#D4D0C8;"></div>
<div style="left:45px;top:200px;width:1px;height:11px;background:#D4D0C8;"></div>
<span style="left:60px;top:200px;width:48px;text-align:right;color:#800000">16</span>
<div style="left:112px;top:197px;width:595px;height:17px;overflow:hidden"><span style="position:absolute;left:1px;top:3px;letter-spacing:-0.75px">BARZINHO DO CENTRO</span></div>
<span style="left:549px;top:200px;">a de mercadoria</span>
<div style="left:22px;top:232px;width:770px;height:1px;background:#C0C0C0;"></div>
<div style="left:59px;top:215px;width:1px;height:18px;background:#C0C0C0;"></div>
<div style="left:111px;top:215px;width:1px;height:18px;background:#C0C0C0;"></div>
<div style="left:707px;top:215px;width:1px;height:18px;background:#C0C0C0;"></div>
<div style="left:10px;top:215px;width:12px;height:18px;background:#D4D0C8;"></div>
<div style="left:10px;top:215px;width:11px;height:1px;background:#FFFFFF;"></div>
<div style="left:10px;top:215px;width:1px;height:17px;background:#FFFFFF;"></div>
<div style="left:21px;top:215px;width:1px;height:18px;background:#000;"></div>
<div style="left:10px;top:232px;width:12px;height:1px;background:#000;"></div>
<div style="left:34px;top:217px;width:13px;height:13px;background:#FFFFFF;"></div>
<div style="left:34px;top:217px;width:12px;height:1px;background:#808080;"></div>
<div style="left:34px;top:217px;width:1px;height:12px;background:#808080;"></div>
<div style="left:35px;top:218px;width:10px;height:1px;background:#000;"></div>
<div style="left:35px;top:218px;width:1px;height:10px;background:#000;"></div>
<div style="left:35px;top:228px;width:11px;height:1px;background:#D4D0C8;"></div>
<div style="left:45px;top:218px;width:1px;height:11px;background:#D4D0C8;"></div>
<span style="left:60px;top:218px;width:48px;text-align:right;color:#800000">16</span>
<div style="left:112px;top:215px;width:595px;height:17px;overflow:hidden"><span style="position:absolute;left:1px;top:3px;letter-spacing:-0.75px">BARZINHO DO CENTRO</span></div>
<span style="left:549px;top:218px;">a de mercadoria</span>
<div style="left:22px;top:233px;width:770px;height:17px;background:#D2E8EC;"></div>
<div style="left:22px;top:250px;width:770px;height:1px;background:#C0C0C0;"></div>
<div style="left:59px;top:233px;width:1px;height:18px;background:#C0C0C0;"></div>
<div style="left:111px;top:233px;width:1px;height:18px;background:#C0C0C0;"></div>
<div style="left:707px;top:233px;width:1px;height:18px;background:#C0C0C0;"></div>
<div style="left:10px;top:233px;width:12px;height:18px;background:#D4D0C8;"></div>
<div style="left:10px;top:233px;width:11px;height:1px;background:#FFFFFF;"></div>
<div style="left:10px;top:233px;width:1px;height:17px;background:#FFFFFF;"></div>
<div style="left:21px;top:233px;width:1px;height:18px;background:#000;"></div>
<div style="left:10px;top:250px;width:12px;height:1px;background:#000;"></div>
<div style="left:34px;top:235px;width:13px;height:13px;background:#FFFFFF;"></div>
<div style="left:34px;top:235px;width:12px;height:1px;background:#808080;"></div>
<div style="left:34px;top:235px;width:1px;height:12px;background:#808080;"></div>
<div style="left:35px;top:236px;width:10px;height:1px;background:#000;"></div>
<div style="left:35px;top:236px;width:1px;height:10px;background:#000;"></div>
<div style="left:35px;top:246px;width:11px;height:1px;background:#D4D0C8;"></div>
<div style="left:45px;top:236px;width:1px;height:11px;background:#D4D0C8;"></div>
<span style="left:60px;top:236px;width:48px;text-align:right;color:#000">16</span>
<div style="left:112px;top:233px;width:595px;height:17px;overflow:hidden"><span style="position:absolute;left:1px;top:3px;letter-spacing:-0.75px">BARZINHO DO CENTRO</span></div>
<span style="left:549px;top:236px;">a de mercadoria</span>
<div style="left:22px;top:268px;width:770px;height:1px;background:#C0C0C0;"></div>
<div style="left:59px;top:251px;width:1px;height:18px;background:#C0C0C0;"></div>
<div style="left:111px;top:251px;width:1px;height:18px;background:#C0C0C0;"></div>
<div style="left:707px;top:251px;width:1px;height:18px;background:#C0C0C0;"></div>
<div style="left:10px;top:251px;width:12px;height:18px;background:#D4D0C8;"></div>
<div style="left:10px;top:251px;width:11px;height:1px;background:#FFFFFF;"></div>
<div style="left:10px;top:251px;width:1px;height:17px;background:#FFFFFF;"></div>
<div style="left:21px;top:251px;width:1px;height:18px;background:#000;"></div>
<div style="left:10px;top:268px;width:12px;height:1px;background:#000;"></div>
<div style="left:34px;top:253px;width:13px;height:13px;background:#FFFFFF;"></div>
<div style="left:34px;top:253px;width:12px;height:1px;background:#808080;"></div>
<div style="left:34px;top:253px;width:1px;height:12px;background:#808080;"></div>
<div style="left:35px;top:254px;width:10px;height:1px;background:#000;"></div>
<div style="left:35px;top:254px;width:1px;height:10px;background:#000;"></div>
<div style="left:35px;top:264px;width:11px;height:1px;background:#D4D0C8;"></div>
<div style="left:45px;top:254px;width:1px;height:11px;background:#D4D0C8;"></div>
<span style="left:60px;top:254px;width:48px;text-align:right;color:#800000">17</span>
<div style="left:112px;top:251px;width:595px;height:17px;overflow:hidden"><span style="position:absolute;left:1px;top:3px;letter-spacing:-0.75px">MERCADINHO BOM PREÇO</span></div>
<span style="left:549px;top:254px;">a de mercadoria</span>
<div style="left:280px;top:184px;width:1px;height:8px;background:#000;"></div>
<svg style="left:12px;top:236px" width="8" height="12" shape-rendering="crispEdges"><path d="M0 0L7 6L0 12z" fill="#000" shape-rendering="auto"/></svg>
<div style="left:792px;top:108px;width:16px;height:169px;background-color:#D4D0C8;background-image:repeating-conic-gradient(#FFFFFF 0 25%,#D4D0C8 0 50%);background-size:2px 2px"></div>
<div style="left:792px;top:108px;width:16px;height:16px;background:#D4D0C8;"></div>
<div style="left:792px;top:123px;width:16px;height:1px;background:#404040;"></div>
<div style="left:807px;top:108px;width:1px;height:16px;background:#404040;"></div>
<div style="left:793px;top:122px;width:14px;height:1px;background:#808080;"></div>
<div style="left:806px;top:109px;width:1px;height:14px;background:#808080;"></div>
<div style="left:793px;top:109px;width:13px;height:1px;background:#FFFFFF;"></div>
<div style="left:793px;top:109px;width:1px;height:13px;background:#FFFFFF;"></div>
<div style="left:792px;top:198px;width:16px;height:55px;background:#D4D0C8;"></div>
<div style="left:792px;top:252px;width:16px;height:1px;background:#404040;"></div>
<div style="left:807px;top:198px;width:1px;height:55px;background:#404040;"></div>
<div style="left:793px;top:251px;width:14px;height:1px;background:#808080;"></div>
<div style="left:806px;top:199px;width:1px;height:53px;background:#808080;"></div>
<div style="left:793px;top:199px;width:13px;height:1px;background:#FFFFFF;"></div>
<div style="left:793px;top:199px;width:1px;height:52px;background:#FFFFFF;"></div>
<div style="left:792px;top:261px;width:16px;height:16px;background:#D4D0C8;"></div>
<div style="left:792px;top:276px;width:16px;height:1px;background:#404040;"></div>
<div style="left:807px;top:261px;width:1px;height:16px;background:#404040;"></div>
<div style="left:793px;top:275px;width:14px;height:1px;background:#808080;"></div>
<div style="left:806px;top:262px;width:1px;height:14px;background:#808080;"></div>
<div style="left:793px;top:262px;width:13px;height:1px;background:#FFFFFF;"></div>
<div style="left:793px;top:262px;width:1px;height:13px;background:#FFFFFF;"></div>
<svg style="left:796px;top:114px" width="7" height="4" shape-rendering="crispEdges"><path d="M3 0h1v1h1v1h1v1h1v1h-7v-1h1v-1h1v-1h1z" fill="#000"/></svg>
<svg style="left:796px;top:267px" width="7" height="4" shape-rendering="crispEdges"><path d="M0 0h7v1h-1v1h-1v1h-1v1h-1v-1h-1v-1h-1v-1h-1z" fill="#000"/></svg>
<div style="left:10px;top:277px;width:782px;height:16px;background-color:#D4D0C8;background-image:repeating-conic-gradient(#FFFFFF 0 25%,#D4D0C8 0 50%);background-size:2px 2px"></div>
<div style="left:10px;top:277px;width:16px;height:16px;background:#D4D0C8;"></div>
<div style="left:10px;top:292px;width:16px;height:1px;background:#404040;"></div>
<div style="left:25px;top:277px;width:1px;height:16px;background:#404040;"></div>
<div style="left:11px;top:291px;width:14px;height:1px;background:#808080;"></div>
<div style="left:24px;top:278px;width:1px;height:14px;background:#808080;"></div>
<div style="left:11px;top:278px;width:13px;height:1px;background:#FFFFFF;"></div>
<div style="left:11px;top:278px;width:1px;height:13px;background:#FFFFFF;"></div>
<div style="left:26px;top:277px;width:16px;height:16px;background:#D4D0C8;"></div>
<div style="left:26px;top:292px;width:16px;height:1px;background:#404040;"></div>
<div style="left:41px;top:277px;width:1px;height:16px;background:#404040;"></div>
<div style="left:27px;top:291px;width:14px;height:1px;background:#808080;"></div>
<div style="left:40px;top:278px;width:1px;height:14px;background:#808080;"></div>
<div style="left:27px;top:278px;width:13px;height:1px;background:#FFFFFF;"></div>
<div style="left:27px;top:278px;width:1px;height:13px;background:#FFFFFF;"></div>
<div style="left:776px;top:277px;width:16px;height:16px;background:#D4D0C8;"></div>
<div style="left:776px;top:292px;width:16px;height:1px;background:#404040;"></div>
<div style="left:791px;top:277px;width:1px;height:16px;background:#404040;"></div>
<div style="left:777px;top:291px;width:14px;height:1px;background:#808080;"></div>
<div style="left:790px;top:278px;width:1px;height:14px;background:#808080;"></div>
<div style="left:777px;top:278px;width:13px;height:1px;background:#FFFFFF;"></div>
<div style="left:777px;top:278px;width:1px;height:13px;background:#FFFFFF;"></div>
<div style="left:792px;top:277px;width:16px;height:16px;background:#D4D0C8;"></div>
<svg style="left:15px;top:281px" width="4" height="7" shape-rendering="crispEdges"><path d="M3 0h1v7h-1v-1h-1v-1h-1v-1h-1v-1h1v-1h1v-1h1z" fill="#000"/></svg>
<svg style="left:782px;top:281px" width="4" height="7" shape-rendering="crispEdges"><path d="M0 0h1v1h1v1h1v1h1v1h-1v1h-1v1h-1v1h-1z" fill="#000"/></svg>
<div style="left:4px;top:297px;width:1px;height:24px;background:#808080;"></div>
<div style="left:5px;top:300px;width:807px;height:1px;background:#FFFFFF;"></div>
<div style="left:5px;top:300px;width:1px;height:19px;background:#FFFFFF;"></div>
<div style="left:5px;top:319px;width:808px;height:1px;background:#808080;"></div>
<div style="left:812px;top:300px;width:1px;height:20px;background:#808080;"></div>
<div style="left:813px;top:299px;width:1px;height:22px;background:#FFFFFF;"></div>
<span style="left:340px;top:304px;color:#000;font-weight:bold;letter-spacing:0.467px;">Lançamentos Contábeis</span>
<div style="left:4px;top:320px;width:810px;height:1px;background:#FFFFFF;"></div>
<div style="left:4px;top:321px;width:404px;height:1px;background:#808080;"></div>
<div style="left:4px;top:321px;width:1px;height:169px;background:#808080;"></div>
<div style="left:5px;top:322px;width:401px;height:1px;background:#FFFFFF;"></div>
<div style="left:5px;top:322px;width:1px;height:167px;background:#FFFFFF;"></div>
<div style="left:5px;top:488px;width:402px;height:1px;background:#808080;"></div>
<div style="left:406px;top:322px;width:1px;height:167px;background:#808080;"></div>
<div style="left:4px;top:489px;width:404px;height:1px;background:#FFFFFF;"></div>
<div style="left:407px;top:321px;width:1px;height:169px;background:#FFFFFF;"></div>
<div style="left:409px;top:321px;width:404px;height:1px;background:#808080;"></div>
<div style="left:409px;top:321px;width:1px;height:169px;background:#808080;"></div>
<div style="left:410px;top:322px;width:401px;height:1px;background:#FFFFFF;"></div>
<div style="left:410px;top:322px;width:1px;height:167px;background:#FFFFFF;"></div>
<div style="left:410px;top:488px;width:402px;height:1px;background:#808080;"></div>
<div style="left:811px;top:322px;width:1px;height:167px;background:#808080;"></div>
<div style="left:409px;top:489px;width:404px;height:1px;background:#FFFFFF;"></div>
<div style="left:812px;top:321px;width:1px;height:169px;background:#FFFFFF;"></div>
<span style="left:9px;top:325px;color:#000;letter-spacing:0.072px;">Conta(s) creditada(s):</span>
<span style="left:414px;top:325px;color:#000;letter-spacing:0.077px;">Conta(s) debitada(s):</span>
<div style="left:7px;top:341px;width:399px;height:1px;background:#808080;"></div>
<div style="left:7px;top:341px;width:1px;height:126px;background:#808080;"></div>
<div style="left:8px;top:342px;width:397px;height:1px;background:#404040;"></div>
<div style="left:8px;top:342px;width:1px;height:124px;background:#404040;"></div>
<div style="left:7px;top:466px;width:399px;height:1px;background:#FFFFFF;"></div>
<div style="left:405px;top:341px;width:1px;height:126px;background:#FFFFFF;"></div>
<div style="left:8px;top:465px;width:397px;height:1px;background:#D4D0C8;"></div>
<div style="left:404px;top:342px;width:1px;height:124px;background:#D4D0C8;"></div>
<div style="left:9px;top:343px;width:395px;height:122px;background:#FFFFFF;"></div>
<div style="left:9px;top:343px;width:12px;height:18px;background:#D4D0C8;"></div>
<div style="left:9px;top:343px;width:12px;height:1px;background:#FFFFFF;"></div>
<div style="left:9px;top:343px;width:1px;height:18px;background:#FFFFFF;"></div>
<div style="left:20px;top:343px;width:1px;height:18px;background:#000;"></div>
<div style="left:9px;top:360px;width:12px;height:1px;background:#000;"></div>
<div style="left:19px;top:344px;width:1px;height:16px;background:#808080;"></div>
<div style="left:10px;top:359px;width:10px;height:1px;background:#808080;"></div>
<div style="left:21px;top:343px;width:69px;height:18px;background:#D4D0C8;"></div>
<div style="left:21px;top:343px;width:69px;height:1px;background:#FFFFFF;"></div>
<div style="left:21px;top:343px;width:1px;height:18px;background:#FFFFFF;"></div>
<div style="left:89px;top:343px;width:1px;height:18px;background:#000;"></div>
<div style="left:21px;top:360px;width:69px;height:1px;background:#000;"></div>
<div style="left:88px;top:344px;width:1px;height:16px;background:#808080;"></div>
<div style="left:22px;top:359px;width:67px;height:1px;background:#808080;"></div>
<div style="left:90px;top:343px;width:189px;height:18px;background:#D4D0C8;"></div>
<div style="left:90px;top:343px;width:189px;height:1px;background:#FFFFFF;"></div>
<div style="left:90px;top:343px;width:1px;height:18px;background:#FFFFFF;"></div>
<div style="left:278px;top:343px;width:1px;height:18px;background:#000;"></div>
<div style="left:90px;top:360px;width:189px;height:1px;background:#000;"></div>
<div style="left:277px;top:344px;width:1px;height:16px;background:#808080;"></div>
<div style="left:91px;top:359px;width:187px;height:1px;background:#808080;"></div>
<div style="left:279px;top:343px;width:109px;height:18px;background:#D4D0C8;"></div>
<div style="left:279px;top:343px;width:109px;height:1px;background:#FFFFFF;"></div>
<div style="left:279px;top:343px;width:1px;height:18px;background:#FFFFFF;"></div>
<div style="left:387px;top:343px;width:1px;height:18px;background:#000;"></div>
<div style="left:279px;top:360px;width:109px;height:1px;background:#000;"></div>
<div style="left:386px;top:344px;width:1px;height:16px;background:#808080;"></div>
<div style="left:280px;top:359px;width:107px;height:1px;background:#808080;"></div>
<div style="left:9px;top:361px;width:12px;height:18px;background:#D4D0C8;"></div>
<div style="left:9px;top:361px;width:11px;height:1px;background:#FFFFFF;"></div>
<div style="left:9px;top:361px;width:1px;height:17px;background:#FFFFFF;"></div>
<div style="left:20px;top:361px;width:1px;height:18px;background:#000;"></div>
<div style="left:9px;top:378px;width:12px;height:1px;background:#000;"></div>
<svg style="left:12px;top:364px" width="7" height="11"><path d="M0 0L6.5 5.5L0 11z" fill="#000"/></svg>
<div style="left:21px;top:378px;width:367px;height:1px;background:#C0C0C0;"></div>
<div style="left:89px;top:361px;width:1px;height:18px;background:#C0C0C0;"></div>
<div style="left:278px;top:361px;width:1px;height:18px;background:#C0C0C0;"></div>
<div style="left:387px;top:361px;width:1px;height:18px;background:#C0C0C0;"></div>
<div style="left:412px;top:341px;width:399px;height:1px;background:#808080;"></div>
<div style="left:412px;top:341px;width:1px;height:126px;background:#808080;"></div>
<div style="left:413px;top:342px;width:397px;height:1px;background:#404040;"></div>
<div style="left:413px;top:342px;width:1px;height:124px;background:#404040;"></div>
<div style="left:412px;top:466px;width:399px;height:1px;background:#FFFFFF;"></div>
<div style="left:810px;top:341px;width:1px;height:126px;background:#FFFFFF;"></div>
<div style="left:413px;top:465px;width:397px;height:1px;background:#D4D0C8;"></div>
<div style="left:809px;top:342px;width:1px;height:124px;background:#D4D0C8;"></div>
<div style="left:414px;top:343px;width:395px;height:122px;background:#FFFFFF;"></div>
<div style="left:414px;top:343px;width:12px;height:18px;background:#D4D0C8;"></div>
<div style="left:414px;top:343px;width:12px;height:1px;background:#FFFFFF;"></div>
<div style="left:414px;top:343px;width:1px;height:18px;background:#FFFFFF;"></div>
<div style="left:425px;top:343px;width:1px;height:18px;background:#000;"></div>
<div style="left:414px;top:360px;width:12px;height:1px;background:#000;"></div>
<div style="left:424px;top:344px;width:1px;height:16px;background:#808080;"></div>
<div style="left:415px;top:359px;width:10px;height:1px;background:#808080;"></div>
<div style="left:426px;top:343px;width:69px;height:18px;background:#D4D0C8;"></div>
<div style="left:426px;top:343px;width:69px;height:1px;background:#FFFFFF;"></div>
<div style="left:426px;top:343px;width:1px;height:18px;background:#FFFFFF;"></div>
<div style="left:494px;top:343px;width:1px;height:18px;background:#000;"></div>
<div style="left:426px;top:360px;width:69px;height:1px;background:#000;"></div>
<div style="left:493px;top:344px;width:1px;height:16px;background:#808080;"></div>
<div style="left:427px;top:359px;width:67px;height:1px;background:#808080;"></div>
<div style="left:495px;top:343px;width:189px;height:18px;background:#D4D0C8;"></div>
<div style="left:495px;top:343px;width:189px;height:1px;background:#FFFFFF;"></div>
<div style="left:495px;top:343px;width:1px;height:18px;background:#FFFFFF;"></div>
<div style="left:683px;top:343px;width:1px;height:18px;background:#000;"></div>
<div style="left:495px;top:360px;width:189px;height:1px;background:#000;"></div>
<div style="left:682px;top:344px;width:1px;height:16px;background:#808080;"></div>
<div style="left:496px;top:359px;width:187px;height:1px;background:#808080;"></div>
<div style="left:684px;top:343px;width:109px;height:18px;background:#D4D0C8;"></div>
<div style="left:684px;top:343px;width:109px;height:1px;background:#FFFFFF;"></div>
<div style="left:684px;top:343px;width:1px;height:18px;background:#FFFFFF;"></div>
<div style="left:792px;top:343px;width:1px;height:18px;background:#000;"></div>
<div style="left:684px;top:360px;width:109px;height:1px;background:#000;"></div>
<div style="left:791px;top:344px;width:1px;height:16px;background:#808080;"></div>
<div style="left:685px;top:359px;width:107px;height:1px;background:#808080;"></div>
<div style="left:414px;top:361px;width:12px;height:18px;background:#D4D0C8;"></div>
<div style="left:414px;top:361px;width:11px;height:1px;background:#FFFFFF;"></div>
<div style="left:414px;top:361px;width:1px;height:17px;background:#FFFFFF;"></div>
<div style="left:425px;top:361px;width:1px;height:18px;background:#000;"></div>
<div style="left:414px;top:378px;width:12px;height:1px;background:#000;"></div>
<svg style="left:417px;top:364px" width="7" height="11"><path d="M0 0L6.5 5.5L0 11z" fill="#000"/></svg>
<div style="left:426px;top:378px;width:367px;height:1px;background:#C0C0C0;"></div>
<div style="left:494px;top:361px;width:1px;height:18px;background:#C0C0C0;"></div>
<div style="left:683px;top:361px;width:1px;height:18px;background:#C0C0C0;"></div>
<div style="left:792px;top:361px;width:1px;height:18px;background:#C0C0C0;"></div>
<span style="left:22px;top:346px;color:#000;">Hierarquia</span>
<span style="left:90px;top:346px;color:#000;letter-spacing:-0.084px;">Nome da Conta</span>
<span style="left:280px;top:346px;color:#000;">Valor</span>
<span style="left:427px;top:346px;color:#000;">Hierarquia</span>
<span style="left:495px;top:346px;color:#000;letter-spacing:-0.084px;">Nome da Conta</span>
<span style="left:685px;top:346px;color:#000;">Valor</span>
<span style="left:8px;top:472px;color:#000;letter-spacing:-0.162px;">Modo de visualização:</span>
<span style="left:413px;top:472px;color:#000;letter-spacing:-0.162px;">Modo de visualização:</span>
<svg style="left:122px;top:473px" width="12" height="12">
<circle cx="6" cy="6" r="5.5" fill="#fff"/>
<path d="M1.8 10.2A5.6 5.6 0 0 1 10.2 1.8" stroke="#808080" fill="none" stroke-width="1.1"/>
<path d="M2.7 9.3A4.6 4.6 0 0 1 9.3 2.7" stroke="#202020" fill="none" stroke-width="1.1"/>
<path d="M2.7 9.3A4.6 4.6 0 0 0 9.3 2.7" stroke="#D4D0C8" fill="none" stroke-width="1"/>
</svg>
<svg style="left:182px;top:473px" width="12" height="12">
<circle cx="6" cy="6" r="5.5" fill="#fff"/>
<path d="M1.8 10.2A5.6 5.6 0 0 1 10.2 1.8" stroke="#808080" fill="none" stroke-width="1.1"/>
<path d="M2.7 9.3A4.6 4.6 0 0 1 9.3 2.7" stroke="#202020" fill="none" stroke-width="1.1"/>
<path d="M2.7 9.3A4.6 4.6 0 0 0 9.3 2.7" stroke="#D4D0C8" fill="none" stroke-width="1"/>
<circle cx="6" cy="6" r="2" fill="#000"/></svg>
<span style="left:139px;top:474px;color:#000;">Árvore</span>
<span style="left:198px;top:474px;color:#000;">Tabela</span>
<svg style="left:527px;top:473px" width="12" height="12">
<circle cx="6" cy="6" r="5.5" fill="#fff"/>
<path d="M1.8 10.2A5.6 5.6 0 0 1 10.2 1.8" stroke="#808080" fill="none" stroke-width="1.1"/>
<path d="M2.7 9.3A4.6 4.6 0 0 1 9.3 2.7" stroke="#202020" fill="none" stroke-width="1.1"/>
<path d="M2.7 9.3A4.6 4.6 0 0 0 9.3 2.7" stroke="#D4D0C8" fill="none" stroke-width="1"/>
</svg>
<svg style="left:587px;top:473px" width="12" height="12">
<circle cx="6" cy="6" r="5.5" fill="#fff"/>
<path d="M1.8 10.2A5.6 5.6 0 0 1 10.2 1.8" stroke="#808080" fill="none" stroke-width="1.1"/>
<path d="M2.7 9.3A4.6 4.6 0 0 1 9.3 2.7" stroke="#202020" fill="none" stroke-width="1.1"/>
<path d="M2.7 9.3A4.6 4.6 0 0 0 9.3 2.7" stroke="#D4D0C8" fill="none" stroke-width="1"/>
<circle cx="6" cy="6" r="2" fill="#000"/></svg>
<span style="left:544px;top:474px;color:#000;">Árvore</span>
<span style="left:603px;top:474px;color:#000;">Tabela</span>
<div style="left:736px;top:496px;width:75px;height:25px;background:#D4D0C8;"></div>
<div style="left:736px;top:496px;width:75px;height:1px;background:#FFFFFF;"></div>
<div style="left:736px;top:496px;width:1px;height:25px;background:#FFFFFF;"></div>
<div style="left:736px;top:520px;width:75px;height:1px;background:#404040;"></div>
<div style="left:810px;top:496px;width:1px;height:25px;background:#404040;"></div>
<div style="left:737px;top:519px;width:73px;height:1px;background:#808080;"></div>
<div style="left:809px;top:497px;width:1px;height:23px;background:#808080;"></div>
<svg style="left:751px;top:500px" width="20" height="18" shape-rendering="crispEdges">
<g fill="#9A9A20"><rect x="1" y="14" width="1" height="1"/><rect x="3" y="14" width="1" height="1"/><rect x="5" y="14" width="1" height="1"/><rect x="2" y="15" width="1" height="1"/><rect x="4" y="15" width="1" height="1"/><rect x="6" y="15" width="1" height="1"/><rect x="12" y="15" width="1" height="1"/><rect x="14" y="14" width="1" height="1"/><rect x="16" y="14" width="1" height="1"/><rect x="13" y="16" width="1" height="1"/><rect x="15" y="15" width="1" height="1"/></g>
<rect x="1" y="13" width="6" height="1" fill="#000"/>
<rect x="6" y="1" width="11" height="13" fill="#000"/><rect x="7" y="2" width="9" height="11" fill="#FFFF00"/>
<path d="M9 3L16 1.5V13.5L9 16.5z" fill="#8A8A3A" shape-rendering="auto"/><path d="M9 3L10 2.8V16L9 16.5z" fill="#E8E8E8" shape-rendering="auto"/>
<rect x="8" y="3" width="1" height="14" fill="#000"/><rect x="9" y="16" width="2" height="1" fill="#000"/>
<rect x="12" y="9" width="2" height="1" fill="#F0F0F0"/>
</svg>
<span style="left:776px;top:504px;color:#000;">Sair</span>
<div style="left:281px;top:46px;width:269px;height:228px;box-shadow:2px 2px 3px rgba(0,0,0,.55)"></div>
<div style="left:544px;top:111px;width:180px;height:43px;box-shadow:2px 2px 3px rgba(0,0,0,.55)"></div>
<div style="left:281px;top:46px;width:269px;height:228px;background:#D4D0C8;"></div>
<div style="left:282px;top:47px;width:266px;height:1px;background:#FFFFFF;"></div>
<div style="left:282px;top:47px;width:1px;height:225px;background:#FFFFFF;"></div>
<div style="left:548px;top:47px;width:1px;height:226px;background:#808080;"></div>
<div style="left:282px;top:272px;width:267px;height:1px;background:#808080;"></div>
<div style="left:549px;top:46px;width:1px;height:228px;background:#404040;"></div>
<div style="left:281px;top:273px;width:269px;height:1px;background:#404040;"></div>
<div style="left:284px;top:114px;width:260px;height:19px;background:#0A246A;"></div>
<span style="left:305px;top:53px;color:#000;letter-spacing:-0.375px;">Processo Normal (SEF - MG)</span>
<svg style="left:537px;top:54px" width="4" height="7" shape-rendering="crispEdges"><path d="M0 0h1v1h1v1h1v1h1v1h-1v1h-1v1h-1v1h-1z" fill="#000"/></svg>
<span style="left:305px;top:80px;color:#000;letter-spacing:-0.316px;">Contingência SCAN</span>
<svg style="left:537px;top:81px" width="4" height="7" shape-rendering="crispEdges"><path d="M0 0h1v1h1v1h1v1h1v1h-1v1h-1v1h-1v1h-1z" fill="#000"/></svg>
<span style="left:305px;top:99px;color:#000;letter-spacing:-0.163px;">Contingência Form. Seg.</span>
<svg style="left:537px;top:100px" width="4" height="7" shape-rendering="crispEdges"><path d="M0 0h1v1h1v1h1v1h1v1h-1v1h-1v1h-1v1h-1z" fill="#000"/></svg>
<span style="left:305px;top:118px;color:#FFFFFF;letter-spacing:-0.076px;">Contingência Form. Seg. Doc. Aux.</span>
<svg style="left:537px;top:119px" width="4" height="7" shape-rendering="crispEdges"><path d="M0 0h1v1h1v1h1v1h1v1h-1v1h-1v1h-1v1h-1z" fill="#FFFFFF"/></svg>
<span style="left:305px;top:145px;color:#000;letter-spacing:-0.163px;">Gerar NF-e para Enviar aos Clientes</span>
<span style="left:305px;top:164px;color:#000;letter-spacing:-0.164px;">Gerar NF-e dos Clientes por período</span>
<span style="left:305px;top:183px;color:#000;letter-spacing:-0.115px;">Enviar Arquivos de NF-e para Clientes</span>
<span style="left:305px;top:202px;color:#000;letter-spacing:-0.070px;">Enviar Arquivos de NF-e para Transportador</span>
<span style="left:305px;top:256px;color:#000;letter-spacing:-0.144px;">Verificar Quebra de Numeração</span>
<div style="left:285px;top:72px;width:260px;height:1px;background:#808080;"></div>
<div style="left:285px;top:73px;width:260px;height:1px;background:#FFFFFF;"></div>
<div style="left:285px;top:137px;width:260px;height:1px;background:#808080;"></div>
<div style="left:285px;top:138px;width:260px;height:1px;background:#FFFFFF;"></div>
<div style="left:285px;top:221px;width:260px;height:1px;background:#808080;"></div>
<div style="left:285px;top:222px;width:260px;height:1px;background:#FFFFFF;"></div>
<div style="left:285px;top:248px;width:260px;height:1px;background:#808080;"></div>
<div style="left:285px;top:249px;width:260px;height:1px;background:#FFFFFF;"></div>
<span style="left:306px;top:230px;color:#FFFFFF;letter-spacing:-0.324px;">Imprimir DANFE</span>
<span style="left:305px;top:229px;color:#808080;letter-spacing:-0.324px;">Imprimir DANFE</span>
<span style="left:484px;top:230px;color:#FFFFFF;letter-spacing:0.287px;">Ctrl+Alt+P</span>
<span style="left:483px;top:229px;color:#808080;letter-spacing:0.287px;">Ctrl+Alt+P</span>
<svg style="left:285px;top:226px" width="17" height="18" shape-rendering="crispEdges">
<rect x="3" y="0" width="8" height="8" fill="#808080"/><rect x="4" y="1" width="6" height="7" fill="#fff"/><rect x="9" y="1" width="1" height="1" fill="#808080"/><rect x="10" y="2" width="2" height="6" fill="#808080"/><rect x="10" y="3" width="1" height="5" fill="#fff"/>
<rect x="5" y="2" width="2" height="1" fill="#808080"/><rect x="5" y="4" width="2" height="1" fill="#808080"/><rect x="5" y="6" width="5" height="1" fill="#808080"/>
<rect x="0" y="8" width="16" height="8" fill="#808080"/><g fill="#fff"><rect x="1" y="9" width="1" height="1"/><rect x="3" y="9" width="1" height="1"/><rect x="5" y="9" width="1" height="1"/><rect x="7" y="9" width="1" height="1"/><rect x="9" y="9" width="1" height="1"/><rect x="11" y="9" width="1" height="1"/><rect x="13" y="9" width="1" height="1"/><rect x="1" y="11" width="1" height="1"/><rect x="3" y="11" width="1" height="1"/><rect x="5" y="11" width="1" height="1"/><rect x="7" y="11" width="1" height="1"/><rect x="9" y="11" width="1" height="1"/><rect x="11" y="11" width="1" height="1"/><rect x="13" y="11" width="1" height="1"/><rect x="2" y="10" width="1" height="1"/><rect x="4" y="10" width="1" height="1"/><rect x="6" y="10" width="1" height="1"/><rect x="8" y="10" width="1" height="1"/><rect x="10" y="10" width="1" height="1"/><rect x="12" y="10" width="1" height="1"/><rect x="14" y="10" width="1" height="1"/></g>
<rect x="1" y="16" width="16" height="1" fill="#fff"/><rect x="16" y="9" width="1" height="8" fill="#fff"/>
</svg>
<div style="left:544px;top:111px;width:180px;height:43px;background:#D4D0C8;"></div>
<div style="left:545px;top:112px;width:177px;height:1px;background:#FFFFFF;"></div>
<div style="left:545px;top:112px;width:1px;height:40px;background:#FFFFFF;"></div>
<div style="left:722px;top:112px;width:1px;height:41px;background:#808080;"></div>
<div style="left:545px;top:152px;width:178px;height:1px;background:#808080;"></div>
<div style="left:723px;top:111px;width:1px;height:43px;background:#404040;"></div>
<div style="left:544px;top:153px;width:180px;height:1px;background:#404040;"></div>
<span style="left:568px;top:118px;color:#000;letter-spacing:-0.180px;">Gerar Lote para FS-DA</span>
<span style="left:569px;top:138px;color:#FFFFFF;letter-spacing:-0.436px;">Imprimir DANFE em FS-DA</span>
<span style="left:568px;top:137px;color:#808080;letter-spacing:-0.436px;">Imprimir DANFE em FS-DA</span>
</div></body></html>
